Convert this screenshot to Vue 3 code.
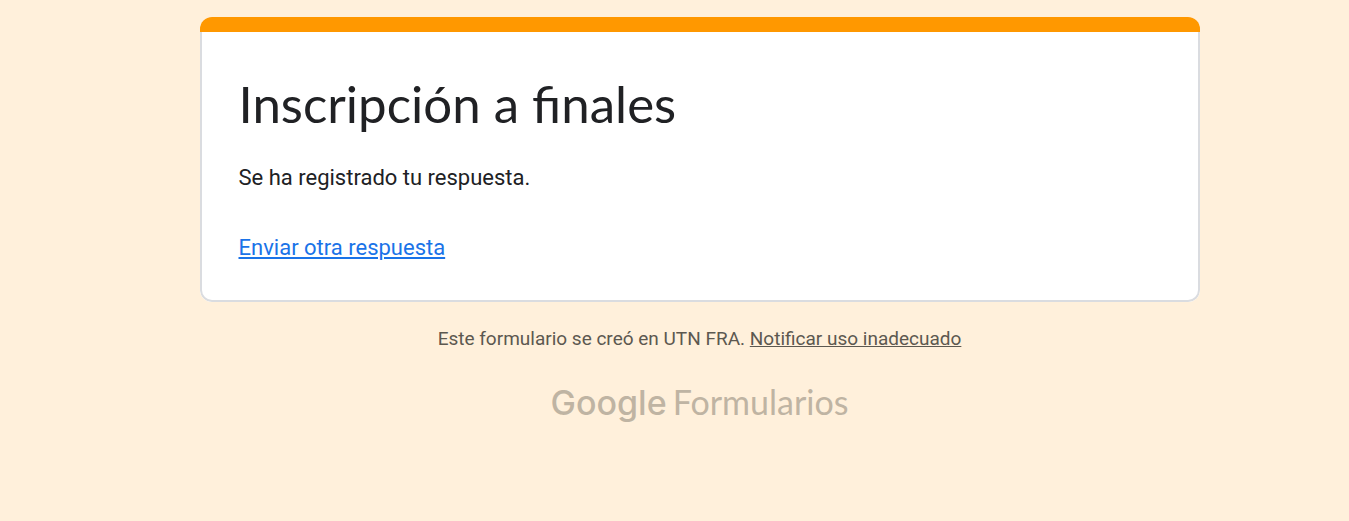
<script setup>
const title = 'Inscripción a finales'
</script>

<template>
  <div class="page">
    <main class="column">
      <section class="card">
        <div class="accent"></div>
        <div class="body">
          <h1>{{ title }}</h1>
          <p class="message">Se ha registrado tu respuesta.</p>
          <a class="again" href="#">Enviar otra respuesta</a>
        </div>
      </section>
      <footer>
        <p class="notice">Este formulario se creó en UTN FRA. <a href="#">Notificar uso inadecuado</a></p>
        <a class="brand" href="#"><span class="google">Google</span><span>Formularios</span></a>
      </footer>
    </main>
  </div>
</template>

<style>
body {
  background: #fff0db;
}
</style>

<style scoped>
.page {
  padding: 17px 0 0 50px;
  font-family: Roboto, "Liberation Sans", sans-serif;
}
.column {
  max-width: 1000px;
  margin: 0 auto;
}
.card {
  overflow: hidden;
  border-radius: 12px;
  background: #fff;
}
.accent {
  height: 15px;
  background: #ff9800;
}
.body {
  padding: 38px 37px 37px;
  border: 2px solid #dadce0;
  border-top: 0;
  border-radius: 0 0 12px 12px;
}
h1 {
  margin: 0;
  font-family: Lato, sans-serif;
  font-size: 51px;
  font-weight: 400;
  line-height: 68px;
  color: #202124;
}
.message {
  margin: 25px 0 40px;
  font-size: 22px;
  line-height: 30px;
  color: #202124;
}
.again {
  display: block;
  width: fit-content;
  font-size: 22px;
  line-height: 30px;
  color: #1a73e8;
}
footer {
  text-align: center;
}
.notice {
  margin: 25px 0 0;
  font-size: 19px;
  line-height: 24px;
  color: #5c5850;
}
.notice a {
  color: inherit;
}
.brand {
  display: flex;
  justify-content: center;
  align-items: baseline;
  gap: 6px;
  width: fit-content;
  margin: 27px auto 0;
  font-family: Lato, sans-serif;
  font-size: 34px;
  line-height: 48px;
  color: #bfb4a3;
  text-decoration: none;
}
.google {
  font-family: Inter, sans-serif;
  font-weight: 500;
}
</style>
